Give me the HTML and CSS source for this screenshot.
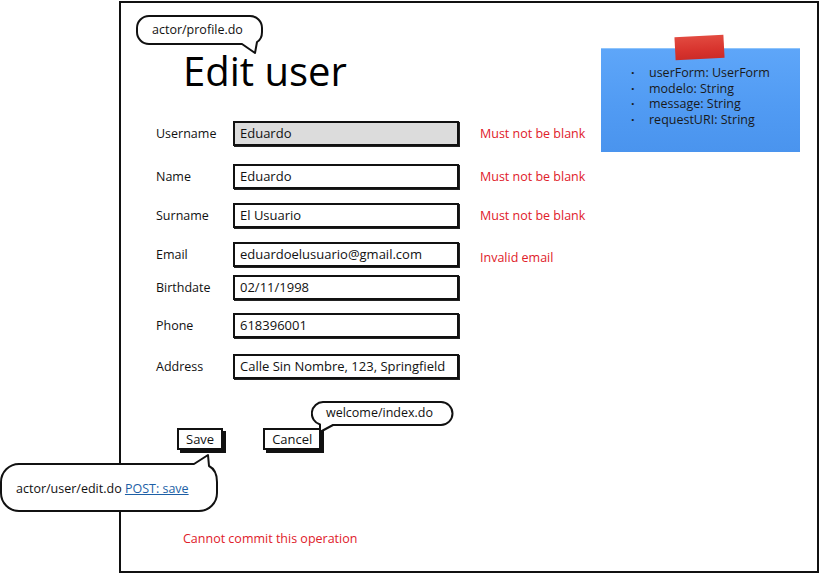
FILE: index.html
```html
<!DOCTYPE html>
<html lang="en">
<head>
<meta charset="utf-8">
<title>Edit user</title>
<link rel="stylesheet" href="styles.css">
</head>
<body>
<div class="frame">
  <h1 class="title">Edit user</h1>
  <div class="form">
    <div class="row"><span class="label">Username</span><div class="field field-disabled">Eduardo</div><span class="error">Must not be blank</span></div>
    <div class="row"><span class="label">Name</span><div class="field">Eduardo</div><span class="error">Must not be blank</span></div>
    <div class="row"><span class="label">Surname</span><div class="field">El Usuario</div><span class="error">Must not be blank</span></div>
    <div class="row"><span class="label">Email</span><div class="field">eduardoelusuario@gmail.com</div><span class="error error-low">Invalid email</span></div>
    <div class="row"><span class="label">Birthdate</span><div class="field">02/11/1998</div></div>
    <div class="row"><span class="label">Phone</span><div class="field">618396001</div></div>
    <div class="row"><span class="label">Address</span><div class="field">Calle Sin Nombre, 123, Springfield</div></div>
  </div>
  <div class="actions">
    <button class="btn" type="button">Save</button>
    <button class="btn" type="button">Cancel</button>
  </div>
  <p class="commit-error">Cannot commit this operation</p>
</div>

<div class="note">
  <div class="tape"></div>
  <ul class="note-list">
    <li>userForm: UserForm</li>
    <li>modelo: String</li>
    <li>message: String</li>
    <li>requestURI: String</li>
  </ul>
</div>

<div class="bubble bubble-profile">
  <svg class="bubble-shape" width="128" height="40" viewBox="0 0 128 40"><path d="M13,1 H114 A12,12 0 0 1 126,13 V17 Q126,24 121,27 L119,38 L106,29 H13 A12,12 0 0 1 1,17 V13 A12,12 0 0 1 13,1 Z" fill="#fff" stroke="#111" stroke-width="2" stroke-linejoin="round"/></svg>
  <span class="bubble-text">actor/profile.do</span>
</div>

<div class="bubble bubble-welcome">
  <svg class="bubble-shape" width="143" height="34" viewBox="0 0 143 34"><path d="M12,1 H130 A11.5,11.5 0 0 1 130,24 H22 L9,31 L9,23.5 A11.5,11.5 0 0 1 12,1 Z" fill="#fff" stroke="#111" stroke-width="2" stroke-linejoin="round"/></svg>
  <span class="bubble-text">welcome/index.do</span>
</div>

<div class="bubble bubble-edit">
  <svg class="bubble-shape" width="220" height="62" viewBox="0 0 220 62"><path d="M19,11 H194 L208,2 L209,13 Q217,17 217,29 V40 A18,18 0 0 1 199,58 H19 A18,18 0 0 1 1,40 V29 A18,18 0 0 1 19,11 Z" fill="#fff" stroke="#111" stroke-width="2" stroke-linejoin="round"/></svg>
  <span class="bubble-text">actor/user/edit.do <a class="link" href="#">POST: save</a></span>
</div>
</body>
</html>
```
FILE: styles.css
```css
* { box-sizing: border-box; }

body {
  margin: 0;
  background: #fff;
  font-family: "Open Sans", "Liberation Sans", sans-serif;
  font-size: 12.5px;
  color: #111;
  width: 820px;
  height: 575px;
  overflow: hidden;
  position: relative;
}

.frame {
  margin: 1px 0 0 119px;
  width: 700px;
  height: 572px;
  border: 2px solid #111;
}

.title {
  margin: 44px 0 0 62px;
  font-size: 40px;
  font-weight: 400;
  line-height: 48px;
  color: #000;
}

.form {
  margin-top: 26px;
  padding-left: 35px;
}

.row {
  display: grid;
  grid-template-columns: 77px 226px auto;
  align-items: center;
  height: 25px;
}

.row:nth-child(2) { margin-top: 18px; }
.row:nth-child(3) { margin-top: 14px; }
.row:nth-child(4) { margin-top: 14px; }
.row:nth-child(5) { margin-top: 8px; }
.row:nth-child(6) { margin-top: 13px; }
.row:nth-child(7) { margin-top: 16px; }

.label { white-space: nowrap; }

.field {
  height: 25px;
  border: 2px solid #111;
  box-shadow: 1px 1px 0 #222;
  padding: 0 0 2px 5px;
  display: flex;
  align-items: center;
  background: #fff;
  white-space: nowrap;
  overflow: hidden;
  font-size: 13px;
}

.field-disabled { background: #dcdcdc; }

.error {
  color: #e0202a;
  white-space: nowrap;
  padding-left: 21px;
}

.error-low { padding-top: 6px; }

.actions {
  margin-top: 49px;
  padding-left: 56px;
  display: flex;
  gap: 40px;
}

.btn {
  font-family: inherit;
  font-size: 13px;
  color: #111;
  background: #fff;
  border: 2px solid #111;
  box-shadow: 3px 3px 0 #111;
  height: 22px;
  padding: 0 7px;
  line-height: 16px;
  cursor: pointer;
}

.commit-error {
  margin: 80px 0 0 62px;
  line-height: 18px;
  color: #e0202a;
}

.note {
  position: absolute;
  left: 601px;
  top: 48px;
  width: 199px;
  height: 104px;
  background: linear-gradient(180deg, #5ea6f9 0%, #519bf3 55%, #4a94ee 100%);
  border-top: 1px solid #8ec4fb;
}

.tape {
  position: absolute;
  left: 74px;
  top: -13px;
  width: 49px;
  height: 23px;
  background: linear-gradient(180deg, #e24a40 0%, #d8342e 60%, #cc2b27 100%);
  transform: rotate(-3deg);
}

.note-list {
  list-style: none;
  margin: 0;
  padding: 16px 0 0 0;
  line-height: 15.5px;
  color: #1a1a1a;
}

.note-list li {
  position: relative;
  padding-left: 48px;
}

.note-list li::before {
  content: "\00B7";
  position: absolute;
  left: 30px;
  font-weight: 700;
}

.bubble {
  position: absolute;
}

.bubble-shape {
  position: absolute;
  left: 0;
  top: 0;
  display: block;
}

.bubble-text {
  position: relative;
  display: block;
  white-space: nowrap;
  color: #111;
}

.bubble-profile {
  left: 136px;
  top: 15px;
  width: 128px;
  height: 40px;
}

.bubble-profile .bubble-text {
  padding: 6px 0 0 16px;
  line-height: 18px;
}

.bubble-welcome {
  left: 311px;
  top: 401px;
  width: 143px;
  height: 34px;
}

.bubble-welcome .bubble-text {
  padding: 3px 0 0 15px;
  line-height: 18px;
}

.bubble-edit {
  left: 0;
  top: 453px;
  width: 220px;
  height: 62px;
}

.bubble-edit .bubble-text {
  padding: 27px 0 0 16px;
  line-height: 18px;
}

.link {
  color: #1d5fa6;
  text-decoration: underline;
}
```
